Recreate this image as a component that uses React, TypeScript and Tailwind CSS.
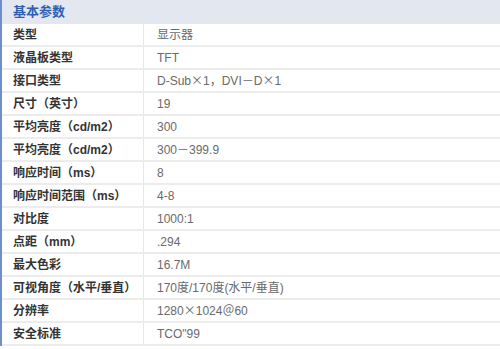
const rows: [string, string][] = [
  ['类型', '显示器'],
  ['液晶板类型', 'TFT'],
  ['接口类型', 'D-Sub×1，DVI－D×1'],
  ['尺寸（英寸）', '19'],
  ['平均亮度（cd/m2）', '300'],
  ['平均亮度（cd/m2）', '300－399.9'],
  ['响应时间（ms）', '8'],
  ['响应时间范围（ms）', '4-8'],
  ['对比度', '1000:1'],
  ['点距（mm）', '.294'],
  ['最大色彩', '16.7M'],
  ['可视角度（水平/垂直）', '170度/170度(水平/垂直)'],
  ['分辨率', '1280×1024＠60'],
  ['安全标准', 'TCO"99'],
];

// wide glyphs (×, ＠) come from the CJK face, like the original page
function Value({ text }: { text: string }) {
  const parts = text.split(/([×＠])/);
  return (
    <>
      {parts.map((p, i) =>
        p === '×' || p === '＠' ? (
          <span key={i} className="font-['Noto_Sans_CJK_SC',sans-serif]">
            {p}
          </span>
        ) : (
          <span key={i}>{p}</span>
        )
      )}
    </>
  );
}

export default function App() {
  return (
    <div className="h-[349px] w-[500px] overflow-hidden bg-white font-['Liberation_Sans','Noto_Sans_CJK_SC',sans-serif]">
      <div className="border-l-2 border-[#6f8fc8]">
        {/* header */}
        <div className="flex h-[24px] items-center bg-[#e3e7f0] pl-[11px]">
          <span className="text-[13px] font-bold text-[#2f5fae]">基本参数</span>
        </div>

        {rows.map(([label, value], i) => (
          <div
            key={i}
            className="flex h-[23px] items-center border-b-2 border-[#ececec]"
          >
            <div className="flex h-full w-[142px] items-center border-r border-[#e6e6e6] pl-[11px] text-[12px] font-bold text-[#333]">
              {label}
            </div>
            <div className="pl-[13px] text-[12px] text-[#6a6a6a]">
              <Value text={value} />
            </div>
          </div>
        ))}
      </div>
    </div>
  );
}
